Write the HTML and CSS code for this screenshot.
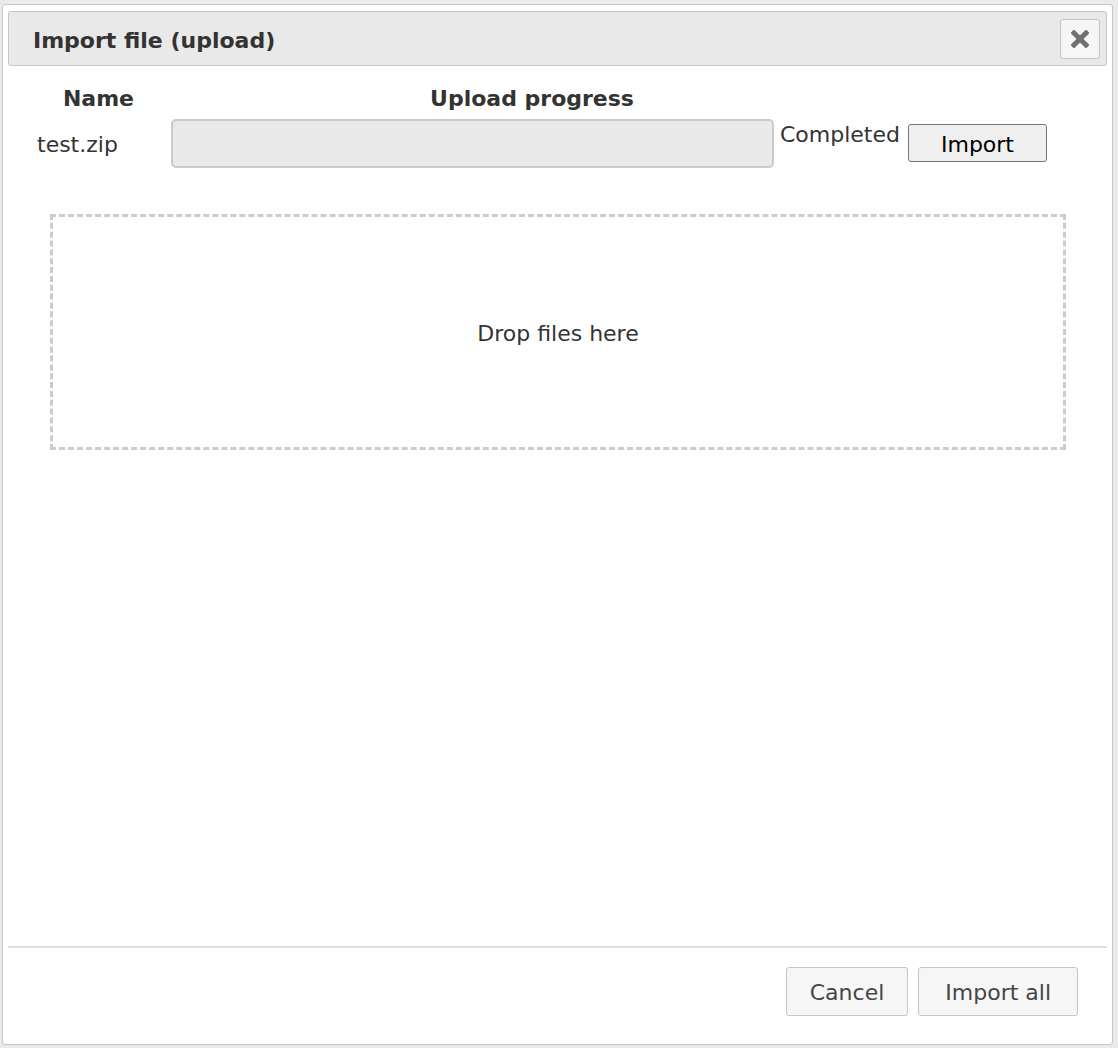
FILE: index.html
```html
<!DOCTYPE html>
<html>
<head>
<meta charset="utf-8">
<title>Import file (upload)</title>
<link rel="stylesheet" href="styles.css">
</head>
<body>
<div class="dialog">
  <div class="titlebar">
    <span class="title">Import file (upload)</span>
    <button class="close" type="button" aria-label="Close">
      <svg width="18" height="18" viewBox="0 0 18 18"><path d="M3 3L15 15M15 3L3 15" stroke="#707070" stroke-width="5" stroke-linecap="square"/></svg>
    </button>
  </div>
  <div class="content">
    <div class="files">
      <div class="th th-name">Name</div>
      <div class="th th-progress">Upload progress</div>
      <div class="td td-name">test.zip</div>
      <div class="td td-bar"><div class="bar"></div></div>
      <div class="td td-status">Completed</div>
      <div class="td td-action"><button class="native-btn" type="button">Import</button></div>
    </div>
    <div class="dropzone">Drop files here</div>
  </div>
  <div class="footer">
    <button class="btn btn-cancel" type="button">Cancel</button>
    <button class="btn btn-all" type="button">Import all</button>
  </div>
</div>
</body>
</html>
```
FILE: styles.css
```css
html, body {
  margin: 0;
  padding: 0;
  background: #eaeaea;
}
body {
  font-family: "DejaVu Sans", Verdana, sans-serif;
  font-size: 22px;
  color: #333;
}
.dialog {
  box-sizing: border-box;
  width: 1111px;
  height: 1041px;
  margin: 4px 0 0 2px;
  padding: 6px 5px 0 5px;
  background: #fff;
  border: 1px solid #c5c5c5;
  border-radius: 3px;
  display: flex;
  flex-direction: column;
}
.titlebar {
  box-sizing: border-box;
  height: 55px;
  background: #e9e9e9;
  border: 1px solid #c5c5c5;
  border-radius: 3px;
  display: flex;
  align-items: center;
  justify-content: space-between;
  padding: 0 6px 0 24px;
}
.title {
  font-weight: bold;
  line-height: 26px;
  color: #333;
  padding-top: 4px;
}
.close {
  box-sizing: border-box;
  width: 40px;
  height: 40px;
  background: #f6f6f6;
  border: 1px solid #c5c5c5;
  border-radius: 3px;
  padding: 0;
  display: flex;
  align-items: center;
  justify-content: center;
}
.close svg {
  display: block;
}
.content {
  flex: 1;
  padding: 20px 0 0 22px;
}
.files {
  display: grid;
  grid-template-columns: 137px 610px 128px 145px;
  grid-template-rows: 26px 49px;
  row-gap: 7px;
  line-height: 26px;
}
.th {
  grid-row: 1;
  font-weight: bold;
  text-align: center;
}
.th-name {
  grid-column: 1;
}
.th-progress {
  grid-column: 2 / 4;
  padding-right: 8px;
}
.td {
  grid-row: 2;
}
.td-name {
  grid-column: 1;
  padding-left: 7px;
  align-self: center;
  margin-top: 3px;
}
.td-bar {
  grid-column: 2;
  padding-left: 4px;
}
.bar {
  box-sizing: border-box;
  width: 603px;
  height: 49px;
  background: #e9e9e9;
  border: 2px solid #cbcbcb;
  border-radius: 5px;
}
.td-status {
  grid-column: 3;
  padding-left: 3px;
  margin-top: 3px;
}
.td-action {
  grid-column: 4;
  padding-left: 3px;
  padding-top: 5px;
}
.native-btn {
  box-sizing: border-box;
  width: 139px;
  height: 38px;
  background: #efefef;
  border: 1px solid #767676;
  border-radius: 3px;
  font-family: "DejaVu Sans", Verdana, sans-serif;
  font-size: 22px;
  line-height: 26px;
  color: #000;
  padding: 3px 0 0 0;
}
.dropzone {
  box-sizing: border-box;
  width: 1016px;
  height: 236px;
  margin: 46px 0 0 20px;
  padding-top: 3px;
  border: 3px dashed #cccccc;
  display: flex;
  align-items: center;
  justify-content: center;
  color: #333;
  line-height: 26px;
}
.footer {
  box-sizing: border-box;
  height: 98px;
  border-top: 2px solid #dedede;
  padding: 19px 29px 28px 0;
  display: flex;
  justify-content: flex-end;
  gap: 10px;
}
.btn {
  box-sizing: border-box;
  height: 49px;
  padding: 2px 23px 0;
  background: #f6f6f6;
  border: 1px solid #c5c5c5;
  border-radius: 3px;
  font-family: "DejaVu Sans", Verdana, sans-serif;
  font-size: 22px;
  line-height: 26px;
  color: #454545;
}
.btn-all {
  padding: 2px 26px 0;
}
```
